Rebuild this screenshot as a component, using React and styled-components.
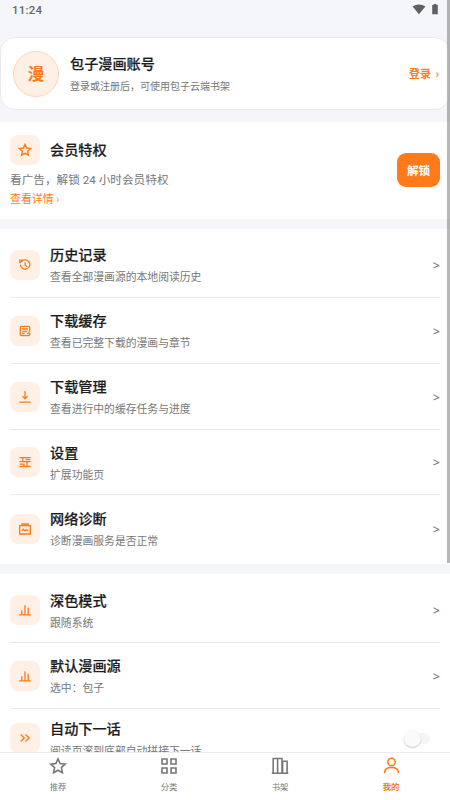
import React from "react";
import styled, { createGlobalStyle } from "styled-components";

const ORANGE = "#ff7a1a";

const GlobalStyle = createGlobalStyle`
  * { box-sizing: border-box; }
  html, body { margin: 0; padding: 0; height: 100%; overflow: hidden; }
  body {
    background: #f5f6fa;
    font-family: "Noto Sans CJK SC", "Noto Sans", sans-serif;
    color: #222;
  }
`;

const Screen = styled.div`
  position: relative;
  width: 450px;
  height: 800px;
  display: flex;
  flex-direction: column;
  overflow: hidden;
  background: #f5f6fa;
`;

const StatusBar = styled.header`
  flex: none;
  height: 37px;
  padding: 2px 11px 0 12px;
  display: flex;
  align-items: flex-start;
  justify-content: space-between;
  color: #66676a;
`;

const Clock = styled.span`
  font: 500 11.5px/17px Roboto, sans-serif;
  letter-spacing: 0.2px;
`;

const StatusIcons = styled.div`
  display: flex;
  gap: 5px;
  padding-top: 1px;
  svg { display: block; }
`;

const Content = styled.main`
  flex: 1;
  min-height: 0;
  overflow: hidden;
`;

const AccountCard = styled.section`
  height: 73px;
  margin-bottom: 12px;
  padding: 0 10px 0 12px;
  display: flex;
  align-items: center;
  background: #fff;
  border: 1px solid #e9eaec;
  border-radius: 15px;
`;

const Avatar = styled.div`
  width: 46px;
  height: 46px;
  margin-right: 11px;
  padding-bottom: 1px;
  display: flex;
  align-items: center;
  justify-content: center;
  border: 1px solid #ffd5b8;
  border-radius: 50%;
  background: #fff0e5;
  color: ${ORANGE};
  font-size: 16.5px;
  font-weight: 700;
  line-height: 20px;
`;

const Texts = styled.div`
  flex: 1;
  padding-top: ${(p) => p.$shift || 0}px;
`;

const Title = styled.div`
  font-size: 14.15px;
  font-weight: 500;
  line-height: ${(p) => p.$line || 21}px;
  color: #1c1c1e;
  -webkit-text-stroke: 0.2px #1c1c1e;
`;

const Subtitle = styled.div`
  font-size: ${(p) => p.$size || 10.82}px;
  line-height: 23px;
  color: #777;
`;

const Login = styled.span`
  display: flex;
  gap: 4.5px;
  margin-bottom: 1px;
  color: ${ORANGE};
  font-size: 11px;
  font-weight: 700;
  line-height: 18px;
`;

const Section = styled.section`
  margin-bottom: 10px;
  padding: ${(p) => p.$pad || "3px 10px"};
  background: #fff;
`;

const Member = styled.div`
  height: 97px;
  display: flex;
  align-items: center;
  justify-content: space-between;
`;

const MemberHead = styled.div`
  display: flex;
  align-items: center;
  height: 30px;
  margin-bottom: 5px;
  ${Title} { margin-bottom: 2px; }
`;

const MemberText = styled.div`
  font-family: Roboto, "Noto Sans CJK SC", sans-serif;
  font-size: 11.65px;
  line-height: 20px;
  color: #777;
`;

const Details = styled.div`
  font-size: 10.9px;
  line-height: 17px;
  color: ${ORANGE};
`;

const Unlock = styled.button`
  width: 43px;
  height: 34px;
  margin-bottom: 2px;
  padding: 0;
  border: 0;
  border-radius: 9px;
  background: ${ORANGE};
  color: #fff;
  font: 700 11.6px/20px "Noto Sans CJK SC", sans-serif;
`;

const Row = styled.div`
  height: ${(p) => (p.$short ? 58.8 : 65.85)}px;
  display: flex;
  align-items: center;
  border-bottom: ${(p) => (p.$last ? 0 : 1)}px solid #e8e8ea;
`;

const IconTile = styled.div`
  flex: none;
  width: 30px;
  height: 30px;
  margin-top: ${(p) => p.$drop || 0}px;
  margin-right: 10px;
  display: flex;
  align-items: center;
  justify-content: center;
  border-radius: 8px;
  background: #fff0e5;
  svg { display: block; }
`;

const Arrow = styled.span`
  padding-top: 3px;
  font: 500 12.5px/16px "Noto Sans", sans-serif;
  color: #777;
`;

const Switch = styled.div`
  width: 26px;
  height: 18px;
  margin-right: 10px;
  display: flex;
  align-items: center;
`;

const Track = styled.div`
  width: 22px;
  height: 11px;
  margin-left: 4px;
  display: flex;
  align-items: center;
  border-radius: 6px;
  background: #f5f5f8;
`;

const Knob = styled.div`
  flex: none;
  width: 17px;
  height: 17px;
  margin-left: -4px;
  border-radius: 50%;
  background: #fafafa;
  box-shadow: 0 1px 1.5px rgba(0, 0, 0, 0.22);
`;

const TabBar = styled.nav`
  flex: none;
  height: 48px;
  padding: 0 3.5px 0 2.5px;
  display: grid;
  grid-template-columns: repeat(4, 1fr);
  border-top: 1px solid #ebebed;
  background: #fff;
`;

const Tab = styled.div`
  display: flex;
  flex-direction: column;
  align-items: center;
  padding-top: 4px;
  color: ${(p) => (p.$active ? ORANGE : "#777")};
  font-size: 8.4px;
  font-weight: ${(p) => (p.$active ? 700 : 400)};
  line-height: 12px;
  svg { display: block; margin-bottom: ${(p) => (p.$active ? 6 : 5)}px; }
`;

const ScrollThumb = styled.div`
  position: absolute;
  top: 0;
  right: 0;
  width: 3px;
  height: 563px;
  background: rgba(90, 90, 92, 0.44);
`;

const STAR = "M9 1.8l2.1 4.7 5.1.6-3.8 3.5 1 5.1L9 13.2l-4.4 2.5 1-5.1L1.8 7.1l5.1-.6z";

const shapes = {
  star: <path d={STAR} />,
  history: (
    <>
      <path d="M4 3.6A7 7 0 1 1 2.2 8.5" />
      <path d="M1.2 1.2v5.3M.4 1.6h5.8M1.6 5.8L5.4 2" />
      <path d="M9.3 5.2v4.2l2.9 2.3" />
    </>
  ),
  cache: (
    <>
      <path d="M16 10V3.6a1.6 1.6 0 0 0-1.6-1.6H3.6a1.6 1.6 0 0 0-1.6 1.6v10.8a1.6 1.6 0 0 0 1.6 1.6h10.8a1.6 1.6 0 0 0 1.6-1.6V12" />
      <path d="M4.6 6h8.8M4.6 9.6h8M4.600 12.800h4M12.300 13.600l3.500-2.800" />
    </>
  ),
  download: <path d="M9 0v11.5M5 7.7l4 4 4-4M.5 16.6h17" />,
  settings: (
    <path d="M.5 2.5h17M.5 8.5h17M.5 15.8h17M5.5 2.5v6M12 8.5v7M10 5.5h7M1 12.2h6.5v3.4" />
  ),
  network: (
    <>
      <path d="M1 4h16v12.5H1zM4.4 3.8V1.4h9.2v2.4" />
      <path d="M4 3h10M4 11.8l2.5-2.4 2.5 2.4 2.3-1.9 2.7 2.1" />
    </>
  ),
  chart: <path d="M.2 16.4h17.6M4.2 16V9.5M9 16V2M13.8 16V5.5" />,
  next: <path d="M2.5 3.8L8 9l-5.5 5.2M9.7 3.8L15.2 9l-5.5 5.2" />,
  grid: <path d="M2 2h5v5H2zM11 2h5v5h-5zM2 11h5v5H2zM11 11h5v5h-5z" />,
  books: (
    <path d="M2.2 1.5h4.4v14.7H2.2zM6.6 1.5H11v14.7H6.600zM11.600 4.200h4.500v12h-4.500zM.8 16.300h16.500" />
  ),
  user: (
    <>
      <circle cx="9" cy="5.3" r="3.9" />
      <path d="M1.7 17.2v-.9c0-3.5 3-5.3 7.3-5.3s7.3 1.8 7.3 5.3v.9" />
    </>
  ),
};

function Icon({ name, size = 12, color = ORANGE, weight = 2 }) {
  return (
    <svg
      width={size}
      height={size}
      viewBox="0 0 18 18"
      fill="none"
      stroke={color}
      strokeWidth={weight}
    >
      {shapes[name]}
    </svg>
  );
}

function MenuRow({ icon, title, note, last }) {
  return (
    <Row $last={last}>
      <IconTile $drop={1}>
        <Icon name={icon} />
      </IconTile>
      <Texts $shift={4}>
        <Title>{title}</Title>
        <Subtitle>{note}</Subtitle>
      </Texts>
      <Arrow>&gt;</Arrow>
    </Row>
  );
}

const library = [
  ["history", "历史记录", "查看全部漫画源的本地阅读历史"],
  ["cache", "下载缓存", "查看已完整下载的漫画与章节"],
  ["download", "下载管理", "查看进行中的缓存任务与进度"],
  ["settings", "设置", "扩展功能页"],
  ["network", "网络诊断", "诊断漫画服务是否正常"],
];

const preferences = [
  ["chart", "深色模式", "跟随系统"],
  ["chart", "默认漫画源", "选中：包子"],
];

const tabs = [
  ["star", "推荐"],
  ["grid", "分类"],
  ["books", "书架"],
  ["user", "我的"],
];

export default function App() {
  return (
    <>
      <GlobalStyle />
      <Screen>
        <StatusBar>
          <Clock>11:24</Clock>
          <StatusIcons>
            <svg width="14" height="12" viewBox="0 0 14 12" fill="#5f6063">
              <path d="M.6 3.6C4.4.9 9.6.9 13.4 3.6L7 11.3z" />
            </svg>
            <svg width="8" height="12" viewBox="0 0 8 12" fill="#5f6063">
              <path d="M2.5.9h3v1.2h1.3v9.2H1.2V2.1h1.3z" />
            </svg>
          </StatusIcons>
        </StatusBar>

        <Content>
          <AccountCard>
            <Avatar>漫</Avatar>
            <Texts $shift={2}>
              <Title>包子漫画账号</Title>
              <Subtitle $size={10}>登录或注册后，可使用包子云端书架</Subtitle>
            </Texts>
            <Login>
              <span>登录</span>
              <span>›</span>
            </Login>
          </AccountCard>

          <Section $pad="0 10px">
            <Member>
              <div>
                <MemberHead>
                  <IconTile>
                    <Icon name="star" size={14} weight={1.8} />
                  </IconTile>
                  <Title $line={22}>会员特权</Title>
                </MemberHead>
                <MemberText>看广告，解锁 24 小时会员特权</MemberText>
                <Details>查看详情 ›</Details>
              </div>
              <Unlock>解锁</Unlock>
            </Member>
          </Section>

          <Section>
            {library.map(([icon, title, note], i) => (
              <MenuRow
                key={title}
                icon={icon}
                title={title}
                note={note}
                last={i === library.length - 1}
              />
            ))}
          </Section>

          <Section>
            {preferences.map(([icon, title, note]) => (
              <MenuRow key={title} icon={icon} title={title} note={note} />
            ))}
            <Row $short $last>
              <IconTile>
                <Icon name="next" />
              </IconTile>
              <Texts $shift={4}>
                <Title>自动下一话</Title>
                <Subtitle>阅读页滚到底部自动拼接下一话</Subtitle>
              </Texts>
              <Switch>
                <Track>
                  <Knob />
                </Track>
              </Switch>
            </Row>
          </Section>
        </Content>

        <TabBar>
          {tabs.map(([icon, label]) => (
            <Tab key={label} $active={icon === "user"}>
              <Icon
                name={icon}
                size={icon === "user" ? 17 : 18}
                color="currentColor"
                weight={1.6}
              />
              {label}
            </Tab>
          ))}
        </TabBar>
        <ScrollThumb />
      </Screen>
    </>
  );
}
